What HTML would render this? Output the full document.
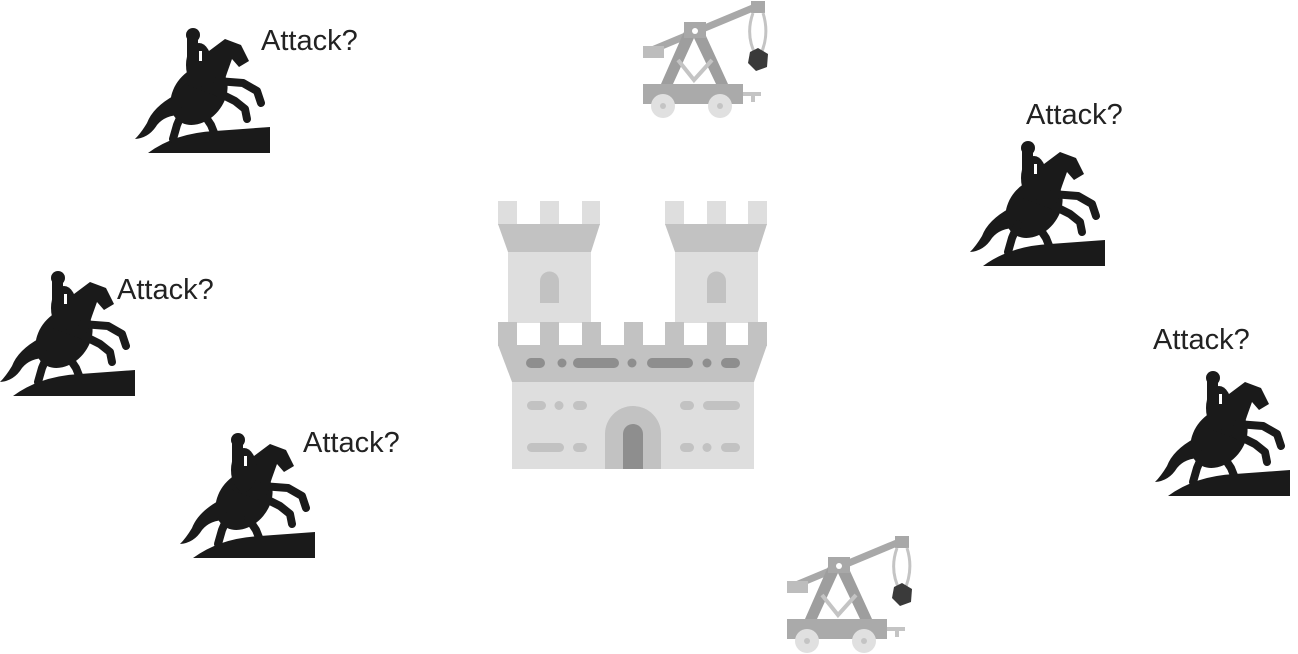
<!DOCTYPE html>
<html><head><meta charset="utf-8"><style>
html,body{margin:0;padding:0;background:#fff;}
body{width:1298px;height:654px;position:relative;overflow:hidden;font-family:"Liberation Sans",sans-serif;}
.t{position:absolute;font-size:29px;color:#222;}
svg{position:absolute;}
</style></head><body>
<svg width="0" height="0" style="position:absolute">
<defs>
<g id="horse" fill="#1a1a1a" stroke="#1a1a1a">
<path stroke="none" d="M13,128 Q40,108 80,106 L135,102 L135,128 Z"/>
<path stroke="none" d="M40,70 Q18,82 12,98 Q6,108 0,114 Q14,113 22,100 Q30,90 46,90 Z"/>
<ellipse stroke="none" cx="64" cy="70" rx="33" ry="25" transform="rotate(-50 64 70)"/>
<path stroke="none" d="M52,60 L74,26 L90,14 L106,20 L114,36 L104,42 L97,34 L92,48 L84,72 Z"/>
<g fill="none" stroke-width="8" stroke-linecap="round" stroke-linejoin="round">
<path d="M82,56 L108,58 L122,66 L126,78"/>
<path d="M80,66 L100,76 L110,84 L112,94"/>
<path d="M48,86 L42,100 L38,114"/>
<path d="M68,88 L76,100 L80,110"/>
</g>
<ellipse stroke="none" cx="64" cy="40" rx="13" ry="22"/>
<circle stroke="none" cx="58" cy="10" r="7"/>
<rect stroke="none" x="52" y="12" width="11" height="32"/>
<rect x="64" y="26" width="3" height="10" fill="#fff" stroke="none"/>
</g>
<g id="cat">
<line x1="22" y1="50" x2="130" y2="5" stroke="#a8a8a8" stroke-width="7"/>
<rect x="13" y="46" width="21" height="12" fill="#bdbdbd"/>
<polygon points="31,84 57,25 71,25 98,84 86,84 64,38 43,84" fill="#9e9e9e"/>
<polyline points="48,60 64,80 82,60" fill="none" stroke="#c4c4c4" stroke-width="4"/>
<rect x="54" y="22" width="22" height="16" fill="#a8a8a8"/>
<circle cx="65" cy="31" r="3" fill="#fff"/>
<rect x="121" y="1" width="14" height="12" fill="#a8a8a8"/>
<path d="M123,13 Q115,35 126,56 M133,13 Q140,35 130,56" fill="none" stroke="#c4c4c4" stroke-width="3"/>
<polygon points="128,48 138,54 137,67 126,71 118,63 120,52" fill="#3a3a3a"/>
<rect x="13" y="84" width="100" height="20" fill="#aaaaaa"/>
<rect x="113" y="92" width="18" height="4" fill="#c4c4c4"/>
<rect x="121" y="92" width="4" height="10" fill="#c4c4c4"/>
<circle cx="33" cy="106" r="12" fill="#e0e0e0"/>
<circle cx="90" cy="106" r="12" fill="#e0e0e0"/>
<circle cx="33" cy="106" r="3" fill="#c4c4c4"/>
<circle cx="90" cy="106" r="3" fill="#c4c4c4"/>
</g>
</defs></svg>

<svg width="1298" height="654" style="left:0;top:0">
<use href="#horse" x="135" y="25"/>
<use href="#horse" x="0" y="268"/>
<use href="#horse" x="180" y="430"/>
<use href="#horse" x="970" y="138"/>
<use href="#horse" x="1155" y="368"/>
<use href="#cat" x="630" y="0"/>
<use href="#cat" x="774" y="535"/>
<g>
<g fill="#dedede">
<rect x="498" y="201" width="19" height="24"/><rect x="540" y="201" width="19" height="24"/><rect x="582" y="201" width="18" height="24"/>
<rect x="665" y="201" width="19" height="24"/><rect x="707" y="201" width="19" height="24"/><rect x="748" y="201" width="19" height="24"/>
<rect x="508" y="251" width="83" height="72"/><rect x="675" y="251" width="83" height="72"/>
<rect x="512" y="381" width="242" height="88"/>
</g>
<g fill="#c2c2c2">
<polygon points="498,224 600,224 591,252 508,252"/>
<polygon points="665,224 767,224 758,252 675,252"/>
<path d="M540,303 V281 a9.5,9.5 0 0 1 19,0 V303 Z"/>
<path d="M707,303 V281 a9.5,9.5 0 0 1 19,0 V303 Z"/>
<rect x="498" y="322" width="19" height="24"/><rect x="540" y="322" width="19" height="24"/><rect x="582" y="322" width="19" height="24"/><rect x="624" y="322" width="19" height="24"/><rect x="665" y="322" width="19" height="24"/><rect x="707" y="322" width="19" height="24"/><rect x="748" y="322" width="19" height="24"/>
<polygon points="498,345 767,345 754,382 512,382"/>
<path d="M605,469 V434 a28,28 0 0 1 56,0 V469 Z"/>
<rect x="527" y="401" width="19" height="9" rx="4.5"/><circle cx="559" cy="405.5" r="4.5"/><rect x="573" y="401" width="14" height="9" rx="4.5"/>
<rect x="680" y="401" width="14" height="9" rx="4.5"/><rect x="703" y="401" width="37" height="9" rx="4.5"/>
<rect x="527" y="443" width="37" height="9" rx="4.5"/><rect x="573" y="443" width="14" height="9" rx="4.5"/>
<rect x="680" y="443" width="14" height="9" rx="4.5"/><circle cx="707" cy="447.5" r="4.5"/><rect x="721" y="443" width="19" height="9" rx="4.5"/>
</g>
<g fill="#8e8e8e">
<rect x="526" y="358" width="19" height="10" rx="5"/><circle cx="562" cy="363" r="4.5"/><rect x="573" y="358" width="46" height="10" rx="5"/><circle cx="632" cy="363" r="4.5"/><rect x="647" y="358" width="46" height="10" rx="5"/><circle cx="707" cy="363" r="4.5"/><rect x="721" y="358" width="19" height="10" rx="5"/>
<path d="M623,469 V434 a10,10 0 0 1 20,0 V469 Z"/>
</g>
</g>
</svg>
<div class="t" style="left:261px;top:25px">Attack?</div>
<div class="t" style="left:117px;top:274px">Attack?</div>
<div class="t" style="left:303px;top:427px">Attack?</div>
<div class="t" style="left:1026px;top:99px">Attack?</div>
<div class="t" style="left:1153px;top:324px">Attack?</div>
</body></html>
